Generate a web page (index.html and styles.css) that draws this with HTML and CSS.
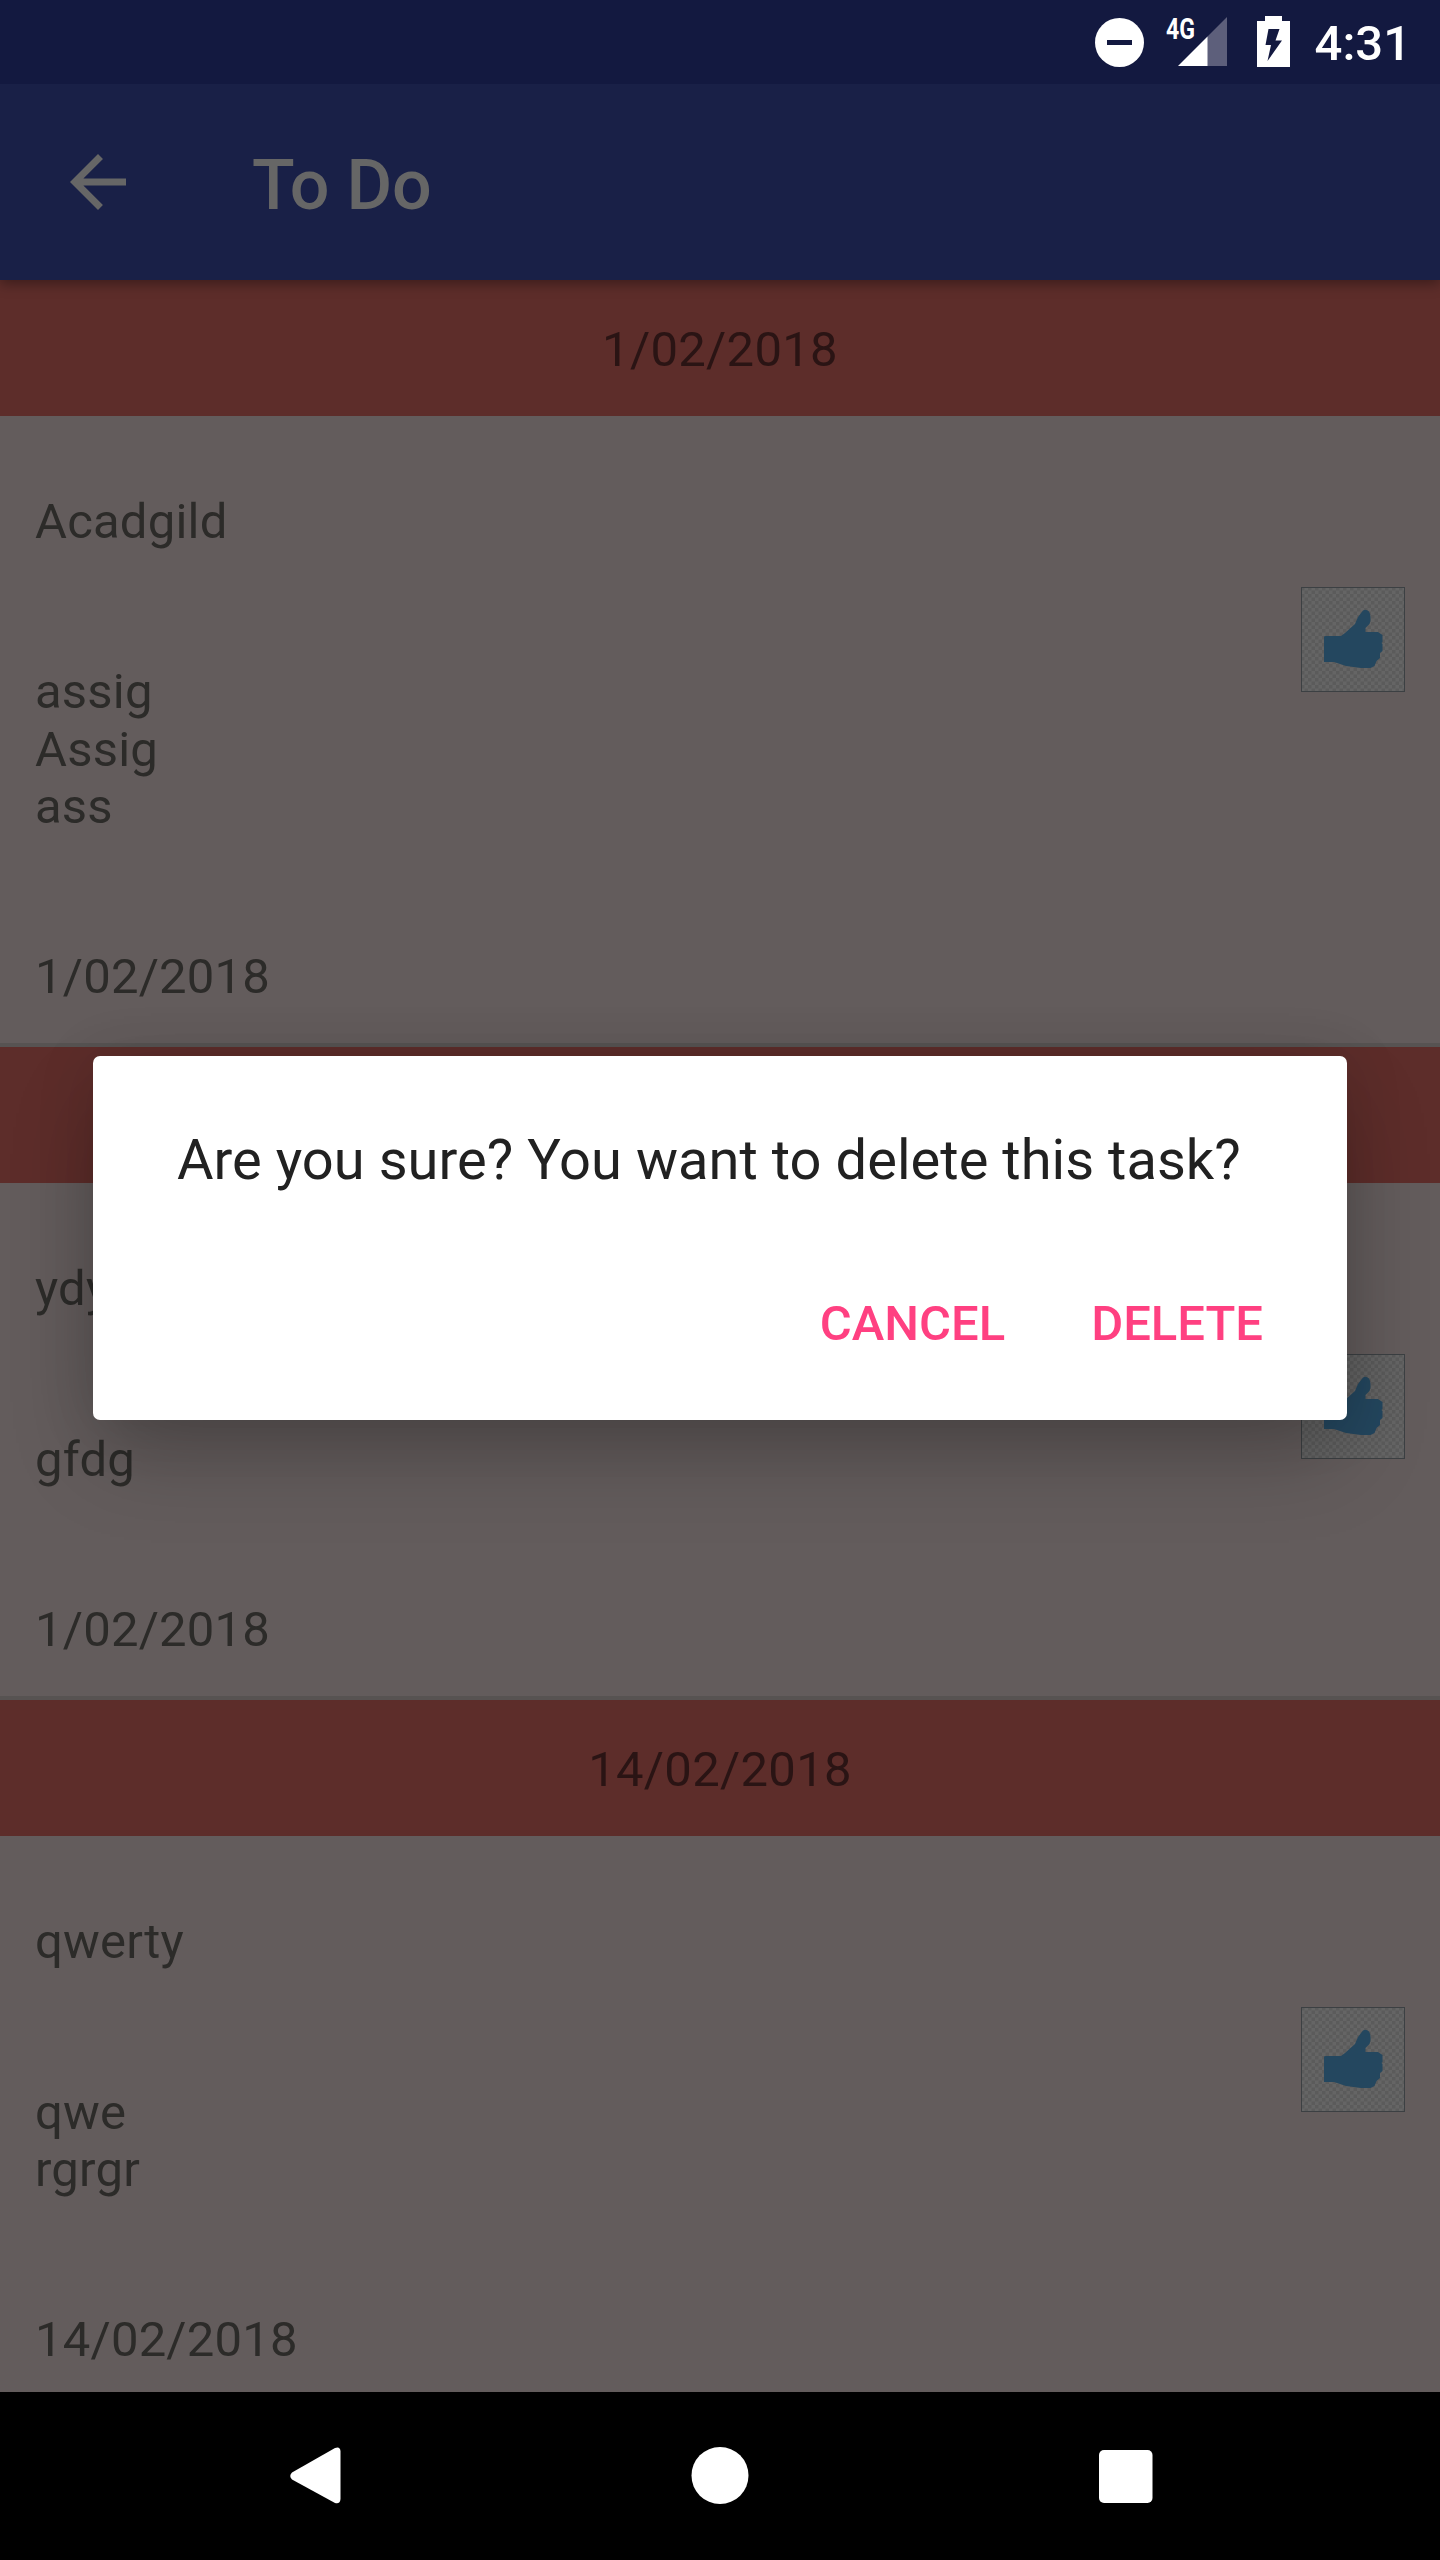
FILE: index.html
```html
<!DOCTYPE html>
<html lang="en">
<head>
<meta charset="utf-8">
<title>To Do</title>
<link rel="stylesheet" href="styles.css">
</head>
<body>
<svg class="defs" aria-hidden="true">
  <defs>
    <pattern id="checker" width="7" height="7" patternUnits="userSpaceOnUse">
      <rect width="7" height="7" fill="#656565"/>
      <rect width="3.500" height="3.500" fill="#5b5b5b"/>
      <rect x="3.500" y="3.500" width="3.500" height="3.500" fill="#5b5b5b"/>
    </pattern>
    <symbol id="thumb" viewBox="0 0 104 105">
      <rect x=".5" y=".5" width="103" height="104" fill="url(#checker)" stroke="#3c4043"/>
      <path fill="#24475f" d="M23 50Q23 49 25 49H40L44 46L54 37L57 30L62 23.500Q65 21.500 68 24.500Q71 30 68.500 37L64.500 41V45H77L81.500 48V55L80.500 56L81.500 57V64L79 66V71L75.500 74L73.500 79L69.500 81H60L45 79L33 75H23Z"/>
    </symbol>
  </defs>
</svg>
<div class="phone">
  <header class="status">
    <svg class="dnd" viewBox="0 0 49 49"><circle cx="24.500" cy="24.500" r="24.500" fill="#fff"/><rect x="12" y="22" width="25" height="5" fill="#131940"/></svg>
    <svg class="signal" viewBox="0 0 62 50"><text x="0" y="22" textLength="29" lengthAdjust="spacingAndGlyphs">4G</text><path fill="#5d5f7b" d="M61 0V49H41V20Z"/><path fill="#fff" d="M12 49L41.500 19.500V49Z"/></svg>
    <svg class="battery" viewBox="0 0 33 51"><path fill="#fff" d="M0 5H8V0H25V5H33V51H0Z"/><path fill="#131940" d="M11.500 13H22.500L18.500 24.500H25L10.500 45L14 29H8.500Z"/></svg>
    <span class="clock">4:31</span>
  </header>
  <div class="appbar">
    <svg class="back" viewBox="0 0 24 24"><path fill="#666" d="M20 11H7.830l5.590-5.590L12 4l-8 8 8 8 1.410-1.410L7.830 13H20v-2z"/></svg>
    <h1 class="title">To Do</h1>
  </div>
  <main class="list">
    <section class="task">
      <h2 class="date">1/02/2018</h2>
      <div class="body">
        <div class="fields"><p>Acadgild</p><p>assig<br>Assig<br>ass</p><p>1/02/2018</p></div>
        <svg class="thumb"><use href="#thumb"/></svg>
      </div>
    </section>
    <section class="task">
      <h2 class="date"></h2>
      <div class="body">
        <div class="fields"><p>ydy</p><p>gfdg</p><p>1/02/2018</p></div>
        <svg class="thumb"><use href="#thumb"/></svg>
      </div>
    </section>
    <section class="task">
      <h2 class="date">14/02/2018</h2>
      <div class="body">
        <div class="fields"><p>qwerty</p><p>qwe<br>rgrgr</p><p>14/02/2018</p></div>
        <svg class="thumb"><use href="#thumb"/></svg>
      </div>
    </section>
  </main>
  <nav class="navbar">
    <svg viewBox="0 0 84 84"><path fill="#fff" d="M20 38.500L63 14Q68 12 68.500 17V65Q68 70.500 63 69L20 45.500Q16.500 42 20 38.500Z"/></svg>
    <svg viewBox="0 0 84 84"><circle cx="42" cy="41.500" r="28.500" fill="#fff"/></svg>
    <svg viewBox="0 0 84 84"><rect x="15" y="16" width="53.500" height="53" rx="5" fill="#fff"/></svg>
  </nav>
  <div class="dialog" role="dialog">
    <p class="message">Are you sure? You want to delete this task?</p>
    <div class="actions"><button>CANCEL</button><button>DELETE</button></div>
  </div>
</div>
</body>
</html>
```
FILE: styles.css
```css
* { box-sizing: border-box; margin: 0; padding: 0; }
body { font-family: Roboto, "Liberation Sans", sans-serif; font-size: 49px; line-height: 57px; background: #000; }
.defs { position: absolute; width: 0; height: 0; }
.phone { position: relative; width: 1440px; height: 2560px; overflow: hidden; display: flex; flex-direction: column; }

.status { flex: none; height: 84px; background: #131940; display: flex; align-items: flex-start; justify-content: flex-end; padding-right: 29px; color: #fff; position: relative; z-index: 2; }
.dnd { width: 49px; height: 49px; margin: 18px 22px 0 0; }
.signal { width: 62px; height: 50px; margin: 17px 29px 0 0; overflow: visible; }
.signal text { font-size: 29px; font-weight: 700; fill: #fff; }
.battery { width: 33px; height: 51px; margin: 16px 25px 0 0; }
.clock { font-weight: 500; margin-top: 15px; }

.appbar { flex: none; height: 196px; background: #192047; display: flex; align-items: center; padding-left: 56px; position: relative; box-shadow: 0 4px 12px rgba(0, 0, 0, .35); z-index: 1; }
.back { width: 84px; height: 84px; }
.title { margin-left: 112px; font-size: 70px; line-height: 82px; font-weight: 500; letter-spacing: -.2px; color: #666; padding-top: 6px; }

.list { flex: 1; min-height: 0; overflow: hidden; background: #635c5c; }
.task { border-bottom: 4px solid #575352; }
.date { height: 136px; padding-top: 41px; text-align: center; font-size: 49px; font-weight: 400; letter-spacing: .3px; background: #5d2d2a; color: #2a1414; }
.body { display: flex; justify-content: space-between; padding: 0 35px; color: #2c2b29; }
.fields { display: flex; flex-direction: column; gap: 113px; padding: 77px 0 38px; line-height: 57.3px; letter-spacing: .2px; }
.thumb { width: 104px; height: 105px; margin-top: 171px; }

.navbar { flex: none; height: 168px; background: #000; display: flex; justify-content: center; align-items: center; gap: 322px; }
.navbar svg { width: 84px; height: 84px; }

.dialog { position: absolute; left: 93px; top: 1056px; width: 1254px; height: 364px; padding: 71px 57px 0 84px; border-radius: 7px; background: #fff; box-shadow: 0 40px 84px -8px rgba(0, 0, 0, .23), 0 4px 60px rgba(0, 0, 0, .12); z-index: 2; }
.message { font-size: 56px; line-height: 66px; letter-spacing: .04px; color: #212121; white-space: nowrap; }
.actions { display: flex; justify-content: flex-end; gap: 32px; padding-top: 102px; }
.actions button { border: 0; background: none; padding: 0 27px; font: 500 49px/57px Roboto, "Liberation Sans", sans-serif; color: #ff4081; }
```
